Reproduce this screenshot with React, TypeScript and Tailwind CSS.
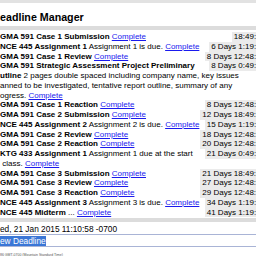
import React from 'react';

type Item = {
    title: string;
    note?: string;
    time: string;
};

const items: Item[] = [
    { title: 'GMA 591 Case 1 Submission', time: '18:49:23' },
    { title: 'NCE 445 Assignment 1', note: 'Assignment 1 is due.', time: '6 Days 1:19:53' },
    { title: 'GMA 591 Case 1 Review', time: '8 Days 12:48:53' },
];

const rest: Item[] = [
    { title: 'GMA 591 Case 1 Reaction', time: '8 Days 12:48:53' },
    { title: 'GMA 591 Case 2 Submission', time: '12 Days 18:49:23' },
    { title: 'NCE 445 Assignment 2', note: 'Assignment 2 is due.', time: '15 Days 1:19:53' },
    { title: 'GMA 591 Case 2 Review', time: '18 Days 12:48:53' },
    { title: 'GMA 591 Case 2 Reaction', time: '20 Days 12:48:53' },
];

const tail: Item[] = [
    { title: 'GMA 591 Case 3 Submission', time: '21 Days 18:49:23' },
    { title: 'GMA 591 Case 3 Review', time: '27 Days 12:48:53' },
    { title: 'GMA 591 Case 3 Reaction', time: '29 Days 12:48:53' },
    { title: 'NCE 445 Assignment 3', note: 'Assignment 3 is due.', time: '34 Days 1:19:53' },
    { title: 'NCE 445 Midterm', note: '...', time: '41 Days 1:19:53' },
];

const Time: React.FC<{ t: string }> = ({ t }) => (
    <span className="float-right bg-[#ebebeb] px-[2px]">{t}</span>
);

const Done: React.FC = () => (
    <a href="#" className="text-[#1a1aee] underline">Complete</a>
);

const Row: React.FC<{ item: Item }> = ({ item }) => (
    <div>
        <Time t={item.time} />
        <b>{item.title}</b> {item.note && <>{item.note} </>}
        <Done />
    </div>
);

export default function App() {
    return (
        <div className="w-[256px] h-[256px] overflow-hidden bg-white text-black font-['Liberation_Sans',Arial,sans-serif]">
            <div className="w-[267px]">
                <div className="h-[3px] bg-[#e2e2e2]" />
                <div className="h-[23px] pt-[7.5px] text-[10.7px] leading-[13px] font-bold">eadline Manager</div>
                <div className="h-[4px] bg-[#dcdcdc]" />

                {/* deadline list */}
                <div className="pt-[2px] text-[8px] leading-[9.75px]">
                    {items.map((it) => <Row key={it.title} item={it} />)}
                    <div>
                        <Time t="8 Days 0:49:53" />
                        <b>GMA 591 Strategic Assessment Project Preliminary</b>
                        <br />
                        <b>utline</b> 2 pages double spaced including company name, key issues
                        <br />
                        anned to be investigated, tentative report outline, summary of any
                        <br />
                        ogress. <Done />
                    </div>
                    {rest.map((it) => <Row key={it.title} item={it} />)}
                    <div>
                        <Time t="21 Days 0:49:53" />
                        <b>KTG 433 Assignment 1</b> Assignment 1 due at the start
                        <br />
                        {'\u00a0'}class. <Done />
                    </div>
                    {tail.map((it) => <Row key={it.title} item={it} />)}
                </div>

                <div className="h-[4px] mt-[1px] bg-[#dcdcdc]" />

                {/* inputs */}
                <div className="h-[13px] pt-[1px] text-[8.3px] leading-[12px] border-b border-[#a9b4d6]">
                    ed, 21 Jan 2015 11:10:58 -0700
                </div>
                <div className="h-[12px] pt-[2px] text-[8.3px] leading-[9px] border-b border-[#a9b4d6]">
                    <span className="bg-[#3a76d6] text-white">ew Deadline</span>
                </div>
                <div className="pt-[6px] text-[3.5px] leading-[4px] text-[#555]">
                    86 GMT-0700 (Mountain Standard Time)
                </div>
            </div>
        </div>
    );
}
